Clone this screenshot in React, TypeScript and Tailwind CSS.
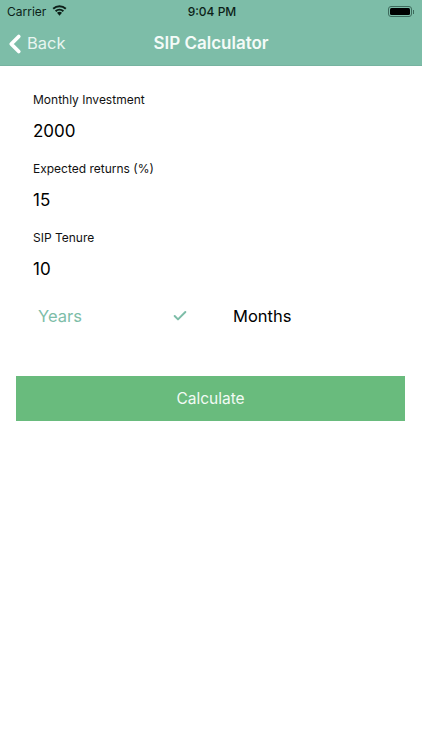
import { ChevronLeft, Check } from 'lucide-react';

const font = "font-['Inter',sans-serif]";

function Field({ label, value }: { label: string; value: string }) {
  return (
    <div className="h-[69px]">
      <p className="h-[31px] pt-[3px] text-[12px] leading-[18px] text-[#111]">{label}</p>
      <p className="text-[17px] leading-[24px] text-black">{value}</p>
    </div>
  );
}

export default function App() {
  return (
    <div className={`${font} w-[422px] h-[750px] bg-white overflow-hidden`}>
      {/* Status bar + nav */}
      <div className="bg-[#7dbda8] h-[66px] border-b border-[#76b3a0]">
        <div className="relative h-[22px] pt-[1px] flex items-center justify-between pl-[7px] pr-[8px] text-[12px] text-[#0c1f18]">
          <div className="flex items-center gap-[6px]">
            <span>Carrier</span>
            <svg width="15" height="11" viewBox="0 0 15 11" className="-mt-[3px]">
              <path d="M7.5 10.8 L5 7.8 A3.8 3.8 0 0 1 10 7.8 Z" fill="#0c1f18" />
              <path d="M3.6 6.2 A5.9 5.9 0 0 1 11.4 6.2" fill="none" stroke="#0c1f18" strokeWidth="2" />
              <path d="M1.2 3.7 A9.4 9.4 0 0 1 13.8 3.7" fill="none" stroke="#0c1f18" strokeWidth="2" />
            </svg>
          </div>
          <span className="absolute left-[2px] right-0 text-center font-medium">9:04 PM</span>
          <div className="flex items-center">
            <div className="w-[24px] h-[11px] rounded-[3px] border border-[#3d6a5c] p-[1px]">
              <div className="w-full h-full bg-black rounded-[1.5px]" />
            </div>
            <div className="w-[1px] h-[4px] bg-[#3d6a5c] ml-[1px]" />
          </div>
        </div>
        <div className="relative h-[43px] flex items-center">
          <ChevronLeft className="w-[30px] h-[30px] text-white" strokeWidth={3} />
          <span className="text-[16.5px] text-[#e8f5f0] -ml-[3px]">Back</span>
          <span className="absolute left-0 right-0 text-center text-[17px] font-semibold text-[#f4fbf8]">SIP Calculator</span>
        </div>
      </div>

      {/* Form */}
      <div className="pt-[22px] pl-[33px]">
        <Field label="Monthly Investment" value="2000" />
        <Field label="Expected returns (%)" value="15" />
        <Field label="SIP Tenure" value="10" />
      </div>
      <div className="mt-[9px] pl-[38px] h-[24px] flex items-center text-[16.5px]">
        <span className="w-[134px] text-[#7dbda8]">Years</span>
        <Check className="w-[16px] h-[16px] text-[#7dbda8]" strokeWidth={3} />
        <span className="ml-[45px] text-black">Months</span>
      </div>

      <button className="mt-[48px] ml-[16px] w-[389px] h-[45px] bg-[#69bb7d] text-[15.5px] text-[#f2faf4]">
        Calculate
      </button>
    </div>
  );
}
